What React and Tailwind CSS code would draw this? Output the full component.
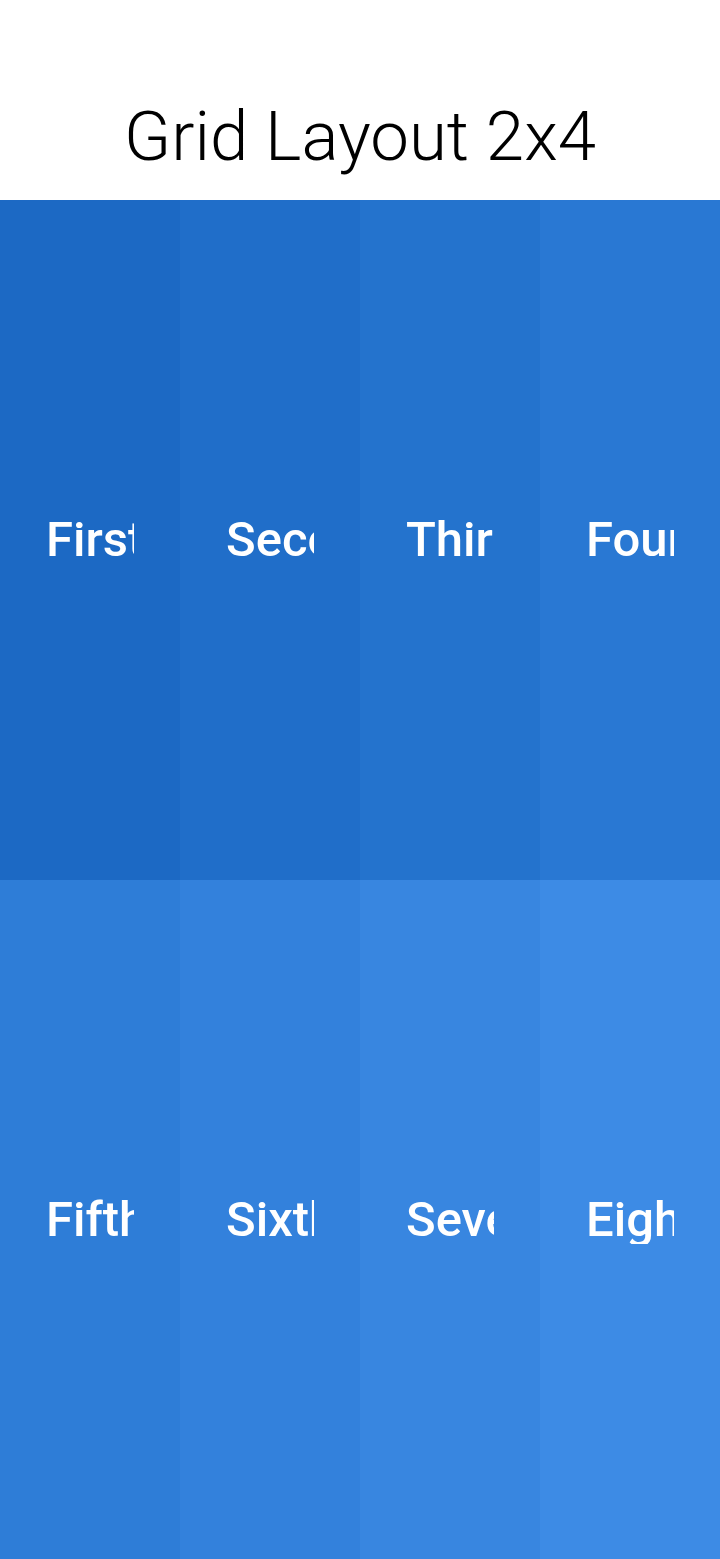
export default function App() {
  const cells = [
    { label: "First", bg: "bg-[#1c69c4]" },
    { label: "Second", bg: "bg-[#206ec9]" },
    { label: "Third", bg: "bg-[#2473cd]" },
    { label: "Fourth", bg: "bg-[#2978d3]" },
    { label: "Fifth", bg: "bg-[#2e7dd7]" },
    { label: "Sixth", bg: "bg-[#3381dc]" },
    { label: "Seventh", bg: "bg-[#3886e0]" },
    { label: "Eighth", bg: "bg-[#3d8be5]" },
  ];
  return (
    <div
      className="flex h-screen flex-col bg-white"
      style={{ fontFamily: "Roboto, 'Noto Sans', sans-serif" }}
    >
      <header className="flex h-[200px] shrink-0 items-center justify-center pt-[72px]">
        <h1 className="text-[69px] font-light leading-none text-black">Grid Layout 2x4</h1>
      </header>
      <div className="grid flex-1 grid-cols-4 grid-rows-2">
        {cells.map((c) => (
          <div key={c.label} className={`flex items-center pl-[46px] pr-[46px] ${c.bg}`}>
            <span className="block w-full overflow-hidden whitespace-nowrap text-[49px] font-medium leading-none text-white">
              {c.label}
            </span>
          </div>
        ))}
      </div>
    </div>
  );
}
